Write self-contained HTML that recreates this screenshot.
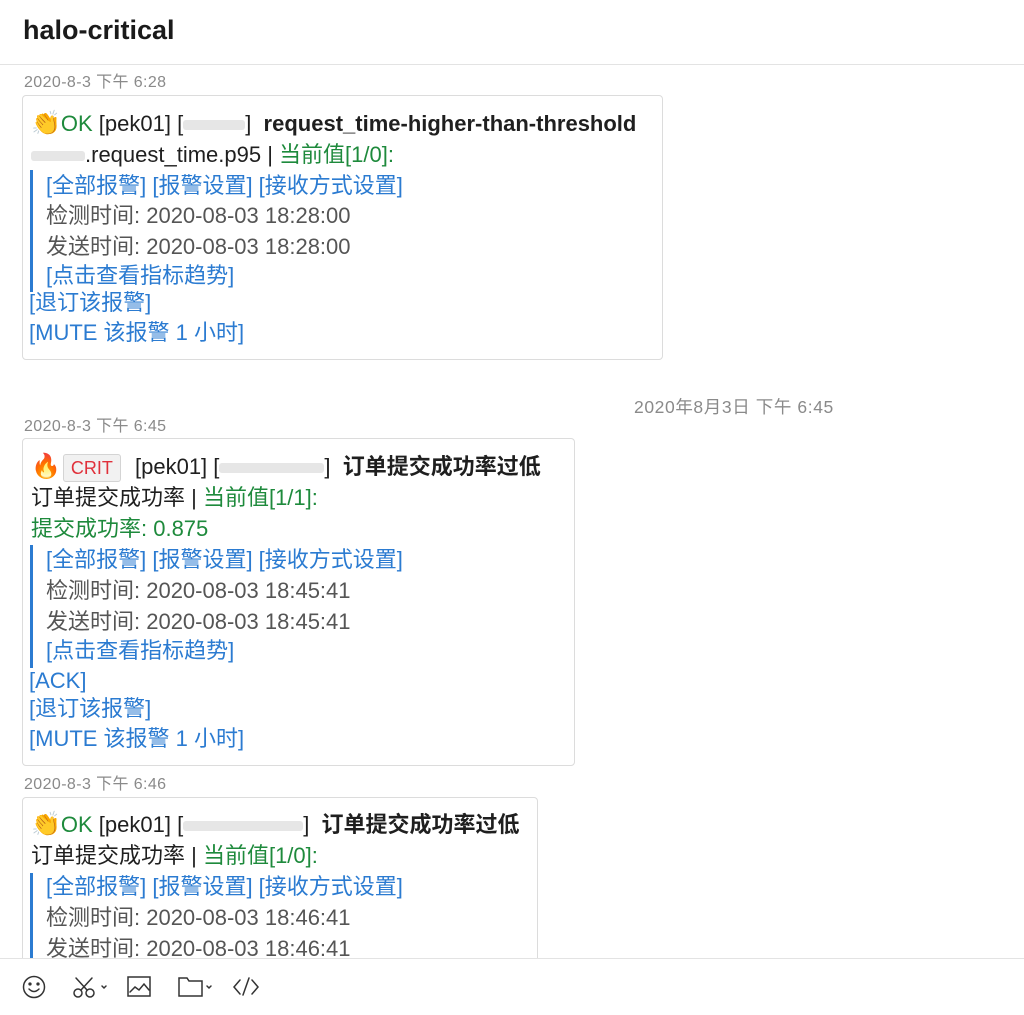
<!DOCTYPE html>
<html><head><meta charset="utf-8"><style>
*{margin:0;padding:0;box-sizing:border-box}
body{width:1024px;height:1015px;background:#fff;position:relative;overflow:hidden;font-family:"Liberation Sans","Noto Sans CJK SC",sans-serif;color:#1f1f1f}
.a{position:absolute;white-space:nowrap}
.h{left:23px;top:11px;font-size:27px;font-weight:bold;line-height:38px;color:#1a1a1a}
.hl{position:absolute;left:0;right:0;height:1px;background:#e3e3e3}
.ts{font-size:16px;color:#8a8a8a;line-height:18px;left:24px;letter-spacing:.4px}
.card{position:absolute;left:22px;border:1px solid #dcdcdc;border-radius:4px;background:#fff}
.l{position:absolute;font-size:22px;line-height:26px;white-space:nowrap}
.b{color:#2b7bd1}.g{color:#1e8a3c}.gr{color:#555}
.e{font-size:24px}
.bar{position:absolute;left:30px;width:3px;background:#2b7bd1}
.blur{display:inline-block;background:#e6e6e6;height:10px;border-radius:3px;vertical-align:middle}
.crit{display:inline-block;border:1px solid #d4d4d4;background:#f1f1f1;border-radius:3px;color:#e0303a;padding:0 7px;font-size:18px;line-height:26px;margin:0 8px 0 2px}
</style></head><body>
<div class="a h">halo-critical</div>
<div class="hl" style="top:64px"></div>

<div class="a ts" style="top:74px">2020-8-3 下午 6:28</div>
<div class="card" style="top:95px;width:641px;height:265px"></div>
<div class="bar" style="top:170px;height:122px"></div>
<div class="l" style="left:31px;top:111px"><span class="e">👏</span><span class="g">OK</span> [pek01] [<span class="blur" style="width:62px"></span>]&nbsp; <b>request_time-higher-than-threshold</b></div>
<div class="l" style="left:31px;top:142px"><span class="blur" style="width:54px"></span>.request_time.p95 | <span class="g">当前值[1/0]:</span></div>
<div class="l b" style="left:46px;top:173px">[全部报警] [报警设置] [接收方式设置]</div>
<div class="l gr" style="left:46px;top:203px">检测时间: 2020-08-03 18:28:00</div>
<div class="l gr" style="left:46px;top:234px">发送时间: 2020-08-03 18:28:00</div>
<div class="l b" style="left:46px;top:263px">[点击查看指标趋势]</div>
<div class="l b" style="left:29px;top:290px">[退订该报警]</div>
<div class="l b" style="left:29px;top:320px">[MUTE 该报警 1 小时]</div>

<div class="a" style="left:634px;top:397px;font-size:17.5px;color:#8a8a8a;line-height:20px;letter-spacing:.6px">2020年8月3日 下午 6:45</div>

<div class="a ts" style="top:418px">2020-8-3 下午 6:45</div>
<div class="card" style="top:438px;width:553px;height:328px"></div>
<div class="bar" style="top:545px;height:123px"></div>
<div class="l" style="left:31px;top:454px"><span class="e">🔥</span><span class="crit">CRIT</span> [pek01] [<span class="blur" style="width:105px"></span>]&nbsp; <b>订单提交成功率过低</b></div>
<div class="l" style="left:31px;top:485px">订单提交成功率 | <span class="g">当前值[1/1]:</span></div>
<div class="l g" style="left:31px;top:516px">提交成功率: 0.875</div>
<div class="l b" style="left:46px;top:547px">[全部报警] [报警设置] [接收方式设置]</div>
<div class="l gr" style="left:46px;top:578px">检测时间: 2020-08-03 18:45:41</div>
<div class="l gr" style="left:46px;top:609px">发送时间: 2020-08-03 18:45:41</div>
<div class="l b" style="left:46px;top:638px">[点击查看指标趋势]</div>
<div class="l b" style="left:29px;top:668px">[ACK]</div>
<div class="l b" style="left:29px;top:696px">[退订该报警]</div>
<div class="l b" style="left:29px;top:726px">[MUTE 该报警 1 小时]</div>

<div class="a ts" style="top:776px">2020-8-3 下午 6:46</div>
<div class="card" style="top:797px;width:516px;height:200px"></div>
<div class="bar" style="top:873px;height:90px"></div>
<div class="l" style="left:31px;top:812px"><span class="e">👏</span><span class="g">OK</span> [pek01] [<span class="blur" style="width:120px"></span>]&nbsp; <b>订单提交成功率过低</b></div>
<div class="l" style="left:31px;top:843px">订单提交成功率 | <span class="g">当前值[1/0]:</span></div>
<div class="l b" style="left:46px;top:874px">[全部报警] [报警设置] [接收方式设置]</div>
<div class="l gr" style="left:46px;top:905px">检测时间: 2020-08-03 18:46:41</div>
<div class="l gr" style="left:46px;top:936px">发送时间: 2020-08-03 18:46:41</div>

<div style="position:absolute;left:0;top:958px;width:1024px;height:57px;background:#fff;border-top:1px solid #e3e3e3"></div>
<svg style="position:absolute;left:0;top:970px" width="300" height="36" fill="none" stroke="#333" stroke-width="1.5" stroke-linecap="round">
<circle cx="34" cy="17" r="10.5"/><circle cx="30" cy="14" r=".9" fill="#333"/><circle cx="38" cy="14" r=".9" fill="#333"/><path d="M29 19q5 5 10 0"/>
<circle cx="78" cy="23" r="4"/><circle cx="90" cy="23" r="4"/><path d="M81 20L92 8M87 20L76 8"/><path d="M102 16l2 2 2-2"/>
<rect x="128" y="7" width="22" height="19"/><path d="M130 22l5-5 4 3 5-6 5 6"/>
<path d="M179 8h8l2 3h13v15h-23z"/><path d="M207 16l2 2 2-2"/>
<path d="M240 10l-6 7 6 7M252 10l6 7-6 7M249 8l-6 17"/>
</svg>
</body></html>
